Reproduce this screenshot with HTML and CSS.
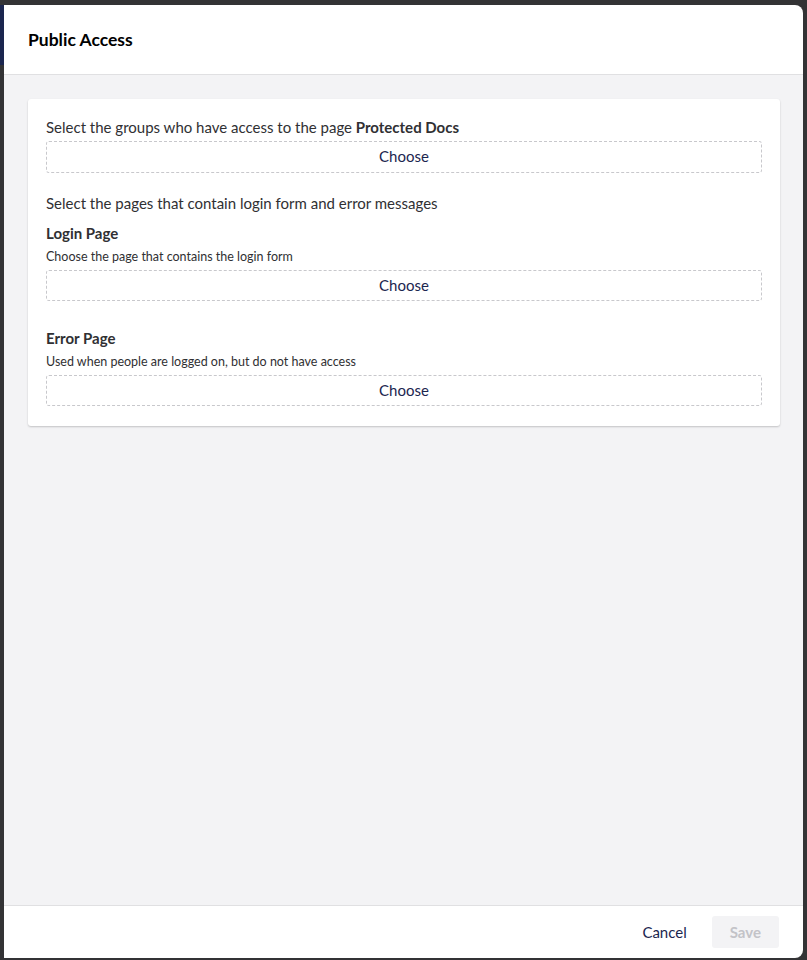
FILE: index.html
```html
<!DOCTYPE html>
<html lang="en">
<head>
    <meta charset="UTF-8">
    <meta name="viewport" content="width=device-width, initial-scale=1.0">
    <title>Public Access</title>
    <link rel="stylesheet" href="styles.css">
</head>
<body>

<div class="backdrop">
    <div class="side-strip"></div>

    <div class="panel">
        <header class="panel-header">
            <h1>Public Access</h1>
        </header>

        <main class="panel-body">
            <div class="card">
                <p class="label">Select the groups who have access to the page <strong>Protected Docs</strong></p>
                <button class="choose">Choose</button>

                <p class="label label-gap">Select the pages that contain login form and error messages</p>

                <h2 class="field-title">Login Page</h2>
                <p class="field-desc">Choose the page that contains the login form</p>
                <button class="choose small">Choose</button>

                <h2 class="field-title field-gap">Error Page</h2>
                <p class="field-desc">Used when people are logged on, but do not have access</p>
                <button class="choose small">Choose</button>
            </div>
        </main>

        <footer class="panel-footer">
            <button class="btn-link">Cancel</button>
            <button class="btn-save" disabled>Save</button>
        </footer>
    </div>
</div>

</body>
</html>
```

FILE: styles.css
```css
body {
    margin: 0;
    font-family: Lato, "Open Sans", sans-serif;
    background: #333335;
    color: #303033;
}

.backdrop {
    display: flex;
    height: 960px;
    padding: 5px 4px 2px 0;
    box-sizing: border-box;
}

.side-strip {
    width: 4px;
    height: 60px;
    background: #1b264f;
}

.panel {
    flex: 1;
    display: flex;
    flex-direction: column;
    background: #fff;
    border-radius: 0 8px 8px 0;
    overflow: hidden;
}

.panel-header {
    height: 69px;
    display: flex;
    align-items: center;
    padding: 0 24px;
    border-bottom: 1px solid #e0e0e2;
}
.panel-header h1 {
    margin: 0;
    font-size: 17.5px;
    font-weight: 700;
    color: #000;
}

.panel-body {
    flex: 1;
    background: #f3f3f5;
    padding: 24px 23px 24px 24px;
}

.card {
    background: #fff;
    border-radius: 3px;
    box-shadow: 0 1px 2px rgba(0, 0, 0, 0.2);
    padding: 18px 18px 20px;
    display: flex;
    flex-direction: column;
}

.label {
    margin: 0 0 4px;
    font-size: 15px;
    line-height: 20px;
}
.label strong {
    font-weight: 700;
}
.label-gap {
    margin-top: 20px;
    margin-bottom: 10px;
}

.choose {
    height: 32px;
    border: 1px dashed #c8c8cc;
    border-radius: 3px;
    background: #fff;
    font-family: inherit;
    font-size: 15px;
    color: #1b264f;
    padding: 0 0 2px;
    cursor: pointer;
}
.choose.small {
    height: 31px;
}

.field-title {
    margin: 0 0 6px;
    font-size: 15px;
    line-height: 20px;
    font-weight: 700;
}
.field-gap {
    margin-top: 27px;
}

.field-desc {
    margin: 0 0 5px;
    font-size: 12.5px;
    line-height: 16px;
}

.panel-footer {
    height: 52px;
    border-top: 1px solid #e0e0e2;
    display: flex;
    align-items: center;
    justify-content: flex-end;
    gap: 10px;
    padding: 0 24px;
}

.btn-link {
    border: none;
    background: none;
    font-family: inherit;
    font-size: 15px;
    color: #1b264f;
    padding: 6px 15px;
    cursor: pointer;
}

.btn-save {
    height: 32px;
    border: none;
    border-radius: 3px;
    background: #f3f3f5;
    font-family: inherit;
    font-size: 15px;
    font-weight: 700;
    color: #c3c3c8;
    padding: 0 18px;
}
```
